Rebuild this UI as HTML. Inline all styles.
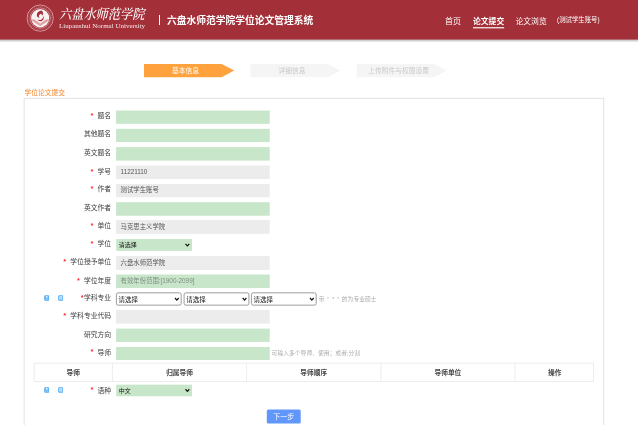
<!DOCTYPE html>
<html><head><meta charset="utf-8">
<style>
html,body{margin:0;padding:0;}
body{width:638px;height:425px;overflow:hidden;background:#fff;font-family:"Liberation Sans","Noto Sans CJK SC",sans-serif;position:relative;color:#333;will-change:transform;}
.abs{position:absolute;}
#hdr{left:0;top:0;width:638px;height:44px;background:linear-gradient(to bottom,#a32f38 0,#a32f38 39.1px,rgba(140,100,105,.55) 39.9px,rgba(140,155,158,.42) 40.6px,rgba(150,160,162,0) 42.6px);}
.t{position:absolute;white-space:nowrap;line-height:1;}
.lab{position:absolute;left:11.1px;width:100px;text-align:right;font-size:6.8px;color:#3d3d3d;white-space:nowrap;}
.lab i{color:#ff2a2a;font-style:normal;font-weight:700;font-size:7.4px;position:relative;top:-0.3px;}
</style></head><body>
<div id="hdr" class="abs"></div>
<!-- logo -->
<svg class="abs" style="left:25.1px;top:3.25px" width="30" height="30" viewBox="0 0 30 30">
<defs><clipPath id="lc"><circle cx="15.2" cy="15.1" r="9.1"/></clipPath></defs>
<circle cx="15.2" cy="15.1" r="13.1" fill="none" stroke="#e9c6c9" stroke-width="0.7"/>
<circle cx="15.2" cy="15.1" r="11.7" fill="none" stroke="#b5525a" stroke-width="1.5" stroke-dasharray="1.2 0.9"/>
<circle cx="15.2" cy="15.1" r="10.2" fill="none" stroke="#e6c0c3" stroke-width="0.6"/>
<circle cx="15.2" cy="15.1" r="9.1" fill="#fbf3f3"/>
<g clip-path="url(#lc)">
<path d="M5 17.6c1.800-1.700 4.400-1.700 6.200 0l4 2.900 4-2.900c1.800-1.700 4.400-1.700 6.200 0v8h-20.400z" fill="#e0a5a9"/>
<path d="M6.500 18.900l8.700 5.300 8.700-5.300" fill="none" stroke="#fbf3f3" stroke-width="1.9"/>
<path d="M8 21.500l7.200 4.300 7.200-4.300v4h-14.400z" fill="#bf5f66"/>
</g>
<path d="M16.700 7.600c-2.800 0.300-4.900 2.100-4.900 4.500 0 1.800 1.300 2.800 2.800 2.700-0.800-0.700-1-1.700-0.400-2.700 0.600-0.900 1.700-1.300 2.500-1.500-0.300 0.800-0.200 1.400 0.400 1.800 1.100-0.600 1.400-2 0.700-3.200-0.200-0.600-0.600-1.100-1.100-1.600z" fill="#a32f38"/>
<path d="M18.100 12.300c0.600 1.700-0.200 3.500-1.900 4.400-1.300 0.600-2.700 0.500-3.600-0.100 0.700 1.400 2.500 2 4.100 1.400 1.900-0.800 2.800-3.100 1.400-5.700z" fill="#a32f38"/>
</svg>
<div class="t" style="left:59px;top:6.5px;font-size:12.3px;color:#fff;font-family:'Noto Serif CJK SC',serif;font-weight:500;letter-spacing:-0.1px;transform:scaleY(1.12);transform-origin:0 0;font-style:italic;">六盘水师范学院</div>
<div class="t" style="left:59px;top:22.5px;font-size:7px;color:#f6e8e8;font-family:'Liberation Serif',serif;">Liupanshui Normal University</div>
<div class="abs" style="left:158.6px;top:15.2px;width:1.2px;height:10.3px;background:#fff;"></div>
<div class="t" style="left:167.1px;top:15.8px;font-size:9.75px;font-weight:700;color:#fff;">六盘水师范学院学位论文管理系统</div>
<div class="t" style="left:445px;top:18px;font-size:8px;color:#fff;">首页</div>
<div class="t" style="left:473px;top:18px;font-size:7.8px;color:#fff;font-weight:700;">论文提交</div>
<div class="t" style="left:515.5px;top:18px;font-size:7.8px;color:#fff;">论文浏览</div>
<div class="t" style="left:557px;top:17.2px;font-size:6.4px;color:#fff;">(测试学生账号)</div>

<!-- steps -->
<svg class="abs" style="left:144px;top:63.5px" width="310" height="14" viewBox="0 0 310 14">
<polygon points="0,0 77.6,0 90.2,6.6 77.6,13.2 0,13.2" fill="#ffa23d"/>
<polygon points="106.3,0 183.9,0 196.5,6.6 183.9,13.2 106.3,13.2" fill="#f5f5f5"/>
<polygon points="212.6,0 290.2,0 302.8,6.6 290.2,13.2 212.6,13.2" fill="#f5f5f5"/>
</svg>
<div class="t" style="left:144px;top:65.5px;line-height:9.5px;width:83px;text-align:center;font-size:6.8px;color:#fff;">基本信息</div>
<div class="t" style="left:250.3px;top:65.5px;line-height:9.5px;width:83.5px;text-align:center;font-size:6.78px;color:#c9c9c9;">详细信息</div>
<div class="t" style="left:356.6px;top:65.5px;line-height:9.5px;width:84px;text-align:center;font-size:6.78px;color:#c9c9c9;">上传附件与权限设置</div>

<div class="t" style="left:24.6px;top:87.8px;line-height:9.4px;font-size:6.72px;color:#f5852a;">学位论文提交</div>
<svg class="abs" style="left:0;top:0" width="638" height="425" viewBox="0 0 638 425"><rect x="473" y="27.2" width="31.2" height="1.15" fill="#fff"/><rect x="24.1" y="98.3" width="579.6" height="340" fill="none" stroke="#dcdcdc" stroke-width="0.8"/></svg>

<svg class="abs" style="left:0;top:0" width="638" height="425" viewBox="0 0 638 425"><rect x="116.10" y="110.55" width="153.60" height="13.30" fill="#c8e6c9" /><rect x="116.10" y="128.80" width="153.60" height="13.30" fill="#c8e6c9" /><rect x="116.10" y="147.10" width="153.60" height="13.50" fill="#c8e6c9" /><rect x="116.10" y="165.50" width="153.60" height="13.50" fill="#ececec" /><rect x="116.10" y="184.00" width="153.60" height="13.20" fill="#ececec" /><rect x="116.10" y="202.20" width="153.60" height="13.50" fill="#c8e6c9" /><rect x="116.10" y="220.10" width="153.60" height="13.70" fill="#ececec" /><rect x="116.20" y="239.05" width="75.80" height="11.85" fill="#c8e6c9" /><path d="M185.50 243.78l1.9 2.1 1.9-2.1" fill="none" stroke="#111" stroke-width="1.2"/><rect x="116.10" y="256.10" width="153.60" height="13.80" fill="#ececec" /><rect x="116.10" y="274.50" width="153.60" height="13.60" fill="#c8e6c9" /><rect x="116.40" y="292.85" width="64.80" height="12.30" fill="#fff" rx="1.7" stroke="#848484" stroke-width="0.8"/><path d="M175.00 298.00l1.85 2.1 1.85-2.1" fill="none" stroke="#111" stroke-width="1.2"/><rect x="184.10" y="292.85" width="64.80" height="12.30" fill="#fff" rx="1.7" stroke="#848484" stroke-width="0.8"/><path d="M242.70 298.00l1.85 2.1 1.85-2.1" fill="none" stroke="#111" stroke-width="1.2"/><rect x="251.40" y="292.85" width="64.80" height="12.30" fill="#fff" rx="1.7" stroke="#848484" stroke-width="0.8"/><path d="M310.00 298.00l1.85 2.1 1.85-2.1" fill="none" stroke="#111" stroke-width="1.2"/><rect x="116.10" y="310.00" width="153.60" height="13.60" fill="#ececec" /><rect x="116.10" y="328.60" width="153.60" height="13.35" fill="#c8e6c9" /><rect x="116.10" y="347.05" width="153.60" height="12.95" fill="#c8e6c9" /><rect x="116.20" y="384.65" width="75.80" height="11.65" fill="#c8e6c9" /><path d="M185.50 389.27l1.9 2.1 1.9-2.1" fill="none" stroke="#111" stroke-width="1.2"/><rect x="34.10" y="363.10" width="559.50" height="18.30" fill="none" stroke="#e8e8e8" stroke-width="0.8"/><path d="M112.4 363.1v18.3" stroke="#e8e8e8" stroke-width="0.8"/><path d="M246.6 363.1v18.3" stroke="#e8e8e8" stroke-width="0.8"/><path d="M380.9 363.1v18.3" stroke="#e8e8e8" stroke-width="0.8"/><path d="M515.0 363.1v18.3" stroke="#e8e8e8" stroke-width="0.8"/><rect x="266.80" y="409.40" width="33.90" height="14.10" fill="#6196fa" rx="1.6"/></svg>
<div class="lab" style="top:111.34px;line-height:9.52px"><i style="margin-right:4.1px">*</i>题名</div>
<div class="lab" style="top:129.09px;line-height:9.52px">其他题名</div>
<div class="lab" style="top:147.99px;line-height:9.52px">英文题名</div>
<div class="lab" style="top:166.89px;line-height:9.52px"><i style="margin-right:4.1px">*</i>学号</div>
<div class="t" style="left:120.6px;top:167.74px;font-size:6.37px;line-height:8.92px;color:#555;letter-spacing:-0.02px;">11221110</div>
<div class="lab" style="top:184.24px;line-height:9.52px"><i style="margin-right:4.1px">*</i>作者</div>
<div class="t" style="left:120.6px;top:186.09px;font-size:6.37px;line-height:8.92px;color:#555;letter-spacing:0px;">测试学生账号</div>
<div class="lab" style="top:203.09px;line-height:9.52px">英文作者</div>
<div class="lab" style="top:221.09px;line-height:9.52px"><i style="margin-right:4.1px">*</i>单位</div>
<div class="t" style="left:120.6px;top:222.94px;font-size:6.37px;line-height:8.92px;color:#555;letter-spacing:0px;">马克思主义学院</div>
<div class="lab" style="top:239.12px;line-height:9.52px"><i style="margin-right:4.1px">*</i>学位</div>
<div class="t" style="left:118.8px;top:240.68px;font-size:6.0px;line-height:8.40px;color:#111;">请选择</div>
<div class="lab" style="top:257.14px;line-height:9.52px"><i style="margin-right:4.1px">*</i>学位授予单位</div>
<div class="t" style="left:120.6px;top:258.99px;font-size:6.37px;line-height:8.92px;color:#555;letter-spacing:0px;">六盘水师范学院</div>
<div class="lab" style="top:275.94px;line-height:9.52px"><i style="margin-right:4.1px">*</i>学位年度</div>
<div class="t" style="left:120.6px;top:276.79px;font-size:6.37px;line-height:8.92px;color:#7f8c80;letter-spacing:0px;">有效年份范围:[1900-2099]</div>
<div class="lab" style="top:293.14px;line-height:9.52px"><i style="margin-right:0.3px">*</i>学科专业</div>
<div class="t" style="left:118.5px;top:294.55px;font-size:6.5px;line-height:9.10px;color:#111;">请选择</div>
<div class="t" style="left:186.2px;top:294.55px;font-size:6.5px;line-height:9.10px;color:#111;">请选择</div>
<div class="t" style="left:253.5px;top:294.55px;font-size:6.5px;line-height:9.10px;color:#111;">请选择</div>
<div class="t" style="left:318.8px;top:294.99px;font-size:5.8px;line-height:8.12px;color:#aaa;word-spacing:1.1px;">带 " * " 的为专业硕士</div>
<div class="lab" style="top:310.94px;line-height:9.52px"><i style="margin-right:4.1px">*</i>学科专业代码</div>
<div class="lab" style="top:329.92px;line-height:9.52px">研究方向</div>
<div class="lab" style="top:347.67px;line-height:9.52px"><i style="margin-right:4.1px">*</i>导师</div>
<div class="lab" style="top:385.61px;line-height:9.52px"><i style="margin-right:4.1px">*</i>语种</div>
<div class="t" style="left:118.8px;top:386.67px;font-size:6.0px;line-height:8.40px;color:#111;">中文</div>
<div class="t" style="left:271.6px;top:349.24px;font-size:5.8px;line-height:8.12px;color:#adadad;">可输入多个导师、使用；或者;分割</div>
<div class="t" style="left:33.7px;top:367.61px;font-size:6.7px;line-height:9.38px;color:#444;width:79.1px;text-align:center;font-weight:700;">导师</div>
<div class="t" style="left:112.0px;top:367.61px;font-size:6.7px;line-height:9.38px;color:#444;width:135.0px;text-align:center;font-weight:700;">归属导师</div>
<div class="t" style="left:246.2px;top:367.61px;font-size:6.7px;line-height:9.38px;color:#444;width:135.1px;text-align:center;font-weight:700;">导师顺序</div>
<div class="t" style="left:380.5px;top:367.61px;font-size:6.7px;line-height:9.38px;color:#444;width:134.9px;text-align:center;font-weight:700;">导师单位</div>
<div class="t" style="left:514.6px;top:367.61px;font-size:6.7px;line-height:9.38px;color:#444;width:80.1px;text-align:center;font-weight:700;">操作</div>
<svg class="abs" style="left:43.5px;top:294.8px" width="5.6" height="6" viewBox="0 0 5.6 6"><rect x="0.2" y="0.2" width="5.2" height="5.5" rx="1.3" fill="#55adf3"/><rect x="1.9" y="0.9" width="1.7" height="1.8" rx="0.3" fill="#e9f4fd"/><rect x="1.1" y="3.3" width="3.4" height="1.5" rx="0.3" fill="#8cc8f7"/></svg>
<svg class="abs" style="left:57.7px;top:294.8px" width="5.6" height="6" viewBox="0 0 5.6 6"><rect x="0.2" y="0.2" width="5.2" height="5.5" rx="1.3" fill="#55adf3"/><rect x="1.3" y="1.3" width="3.0" height="3.3" rx="0.4" fill="#e4f1fc"/><rect x="2.2" y="2.3" width="1.2" height="1.3" fill="#6ab6f4"/></svg>
<svg class="abs" style="left:43.5px;top:386.5px" width="5.6" height="6" viewBox="0 0 5.6 6"><rect x="0.2" y="0.2" width="5.2" height="5.5" rx="1.3" fill="#55adf3"/><rect x="1.9" y="0.9" width="1.7" height="1.8" rx="0.3" fill="#e9f4fd"/><rect x="1.1" y="3.3" width="3.4" height="1.5" rx="0.3" fill="#8cc8f7"/></svg>
<svg class="abs" style="left:57.7px;top:386.5px" width="5.6" height="6" viewBox="0 0 5.6 6"><rect x="0.2" y="0.2" width="5.2" height="5.5" rx="1.3" fill="#55adf3"/><rect x="1.3" y="1.3" width="3.0" height="3.3" rx="0.4" fill="#e4f1fc"/><rect x="2.2" y="2.3" width="1.2" height="1.3" fill="#6ab6f4"/></svg>
<div class="t" style="left:266.8px;top:411.80px;font-size:7.0px;line-height:9.80px;color:#fff;width:33.9px;text-align:center;">下一步</div>
</body></html>
